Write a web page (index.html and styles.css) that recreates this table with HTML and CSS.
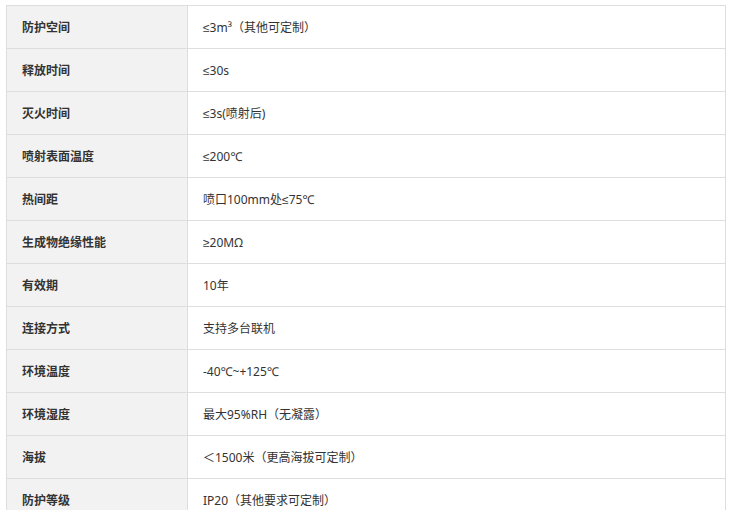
FILE: index.html
```html
<!DOCTYPE html>
<html lang="zh">
<head>
<meta charset="utf-8">
<link rel="stylesheet" href="styles.css">
</head>
<body>
<table class="spec">
<tbody>
<tr><td class="k">防护空间</td><td class="v"><span class="sym">≤</span>3m³（其他可定制）</td></tr>
<tr><td class="k">释放时间</td><td class="v"><span class="sym">≤</span>30s</td></tr>
<tr><td class="k">灭火时间</td><td class="v"><span class="sym">≤</span>3s(喷射后)</td></tr>
<tr><td class="k">喷射表面温度</td><td class="v"><span class="sym">≤</span>200℃</td></tr>
<tr><td class="k">热间距</td><td class="v">喷口100mm处<span class="sym">≤</span>75℃</td></tr>
<tr><td class="k">生成物绝缘性能</td><td class="v"><span class="sym">≥</span>20MΩ</td></tr>
<tr><td class="k">有效期</td><td class="v">10年</td></tr>
<tr><td class="k">连接方式</td><td class="v">支持多台联机</td></tr>
<tr><td class="k">环境温度</td><td class="v">-40℃~+125℃</td></tr>
<tr><td class="k">环境湿度</td><td class="v">最大95%RH（无凝露）</td></tr>
<tr><td class="k">海拔</td><td class="v">＜1500米（更高海拔可定制）</td></tr>
<tr><td class="k">防护等级</td><td class="v">IP20（其他要求可定制）</td></tr>
</tbody>
</table>
</body>
</html>
```
FILE: styles.css
```css
html, body {
  margin: 0;
  background: #fff;
}
body {
  padding: 5px 0 0 6px;
  font-family: "Noto Sans", "Noto Sans CJK SC", sans-serif;
  font-size: 12px;
  color: #333;
}
.spec {
  border-collapse: collapse;
  width: 720px;
  table-layout: fixed;
}
.spec td {
  border: 1px solid #dedede;
  height: 43px;
  padding: 1px 15px 0;
  box-sizing: border-box;
  vertical-align: middle;
  line-height: 18px;
}
.spec .k {
  width: 181px;
  background: #f2f2f2;
  font-weight: bold;
}
.spec .v {
  background: #fff;
}
.sym {
  font-family: "Liberation Sans", sans-serif;
}
```
